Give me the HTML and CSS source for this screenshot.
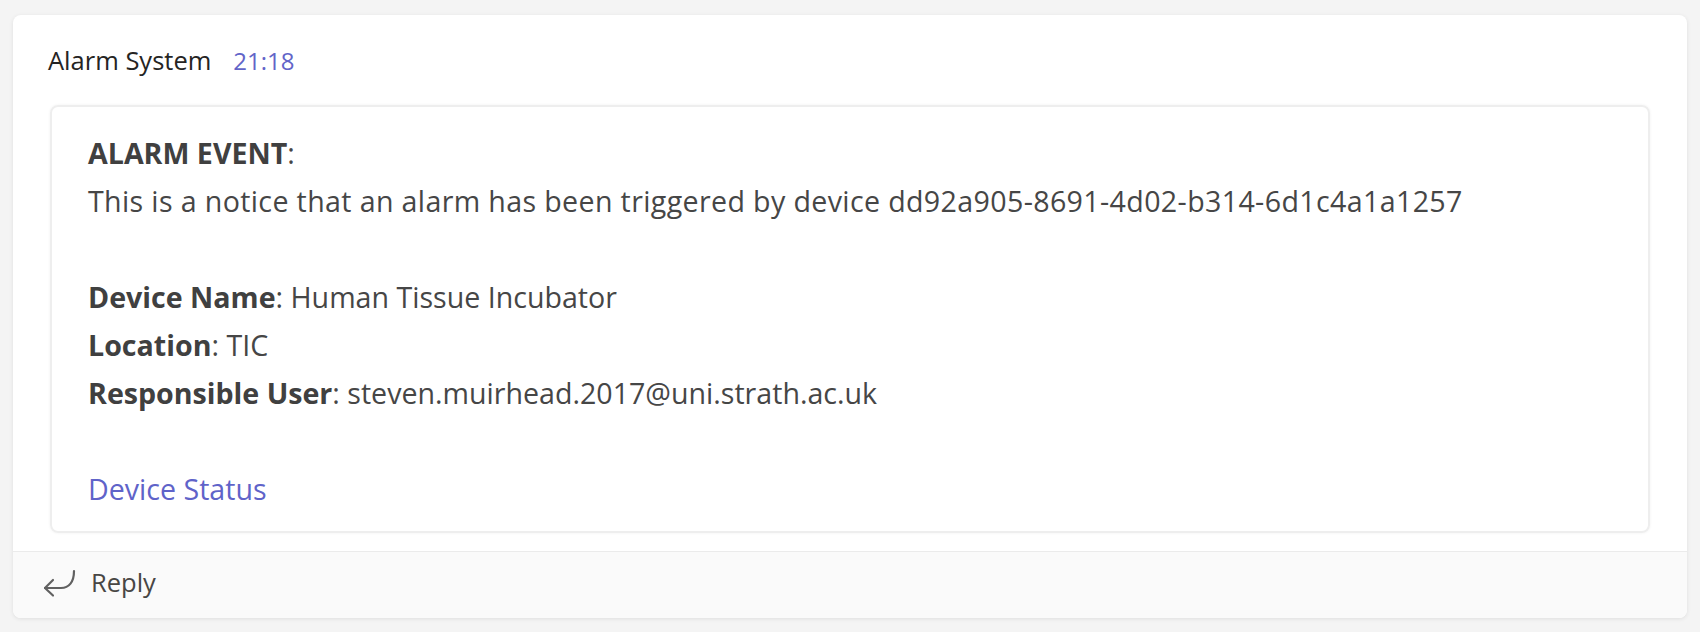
FILE: index.html
```html
<!DOCTYPE html>
<html lang="en">
<head>
<meta charset="utf-8">
<title>Alarm System</title>
<link rel="stylesheet" href="styles.css">
</head>
<body>
<div class="message">
  <div class="msg-header">
    <span class="sender">Alarm System</span>
    <span class="time">21:18</span>
  </div>
  <div class="card">
    <p class="line"><strong>ALARM EVENT</strong>:</p>
    <p class="line wide">This is a notice that an alarm has been triggered by device dd92a905-8691-4d02-b314-6d1c4a1a1257</p>
    <p class="line spaced"><strong>Device Name</strong>: Human Tissue Incubator</p>
    <p class="line"><strong>Location</strong>: TIC</p>
    <p class="line"><strong>Responsible User</strong>: steven.muirhead.2017@uni.strath.ac.uk</p>
    <p class="line spaced"><a class="link" href="#">Device Status</a></p>
  </div>
  <div class="footer">
    <svg class="reply-icon" width="34" height="30" viewBox="0 0 34 30" aria-hidden="true">
      <path d="M10 12 L2 20 L10 27.5" fill="none" stroke="#616161" stroke-width="2.2" stroke-linecap="round" stroke-linejoin="round"/>
      <path d="M2 20 H18 C26 20 31 14 31 3" fill="none" stroke="#616161" stroke-width="2.2" stroke-linecap="round" stroke-linejoin="round"/>
    </svg>
    <span class="reply">Reply</span>
  </div>
</div>
</body>
</html>
```

FILE: styles.css
```css
html, body {
  margin: 0;
  padding: 0;
}
body {
  background: #f4f4f4;
  padding: 15px 13px 14px 13px;
  font-family: "Open Sans", "Noto Sans", sans-serif;
  color: #424242;
}
.message {
  background: #ffffff;
  border-radius: 8px;
  box-shadow: 0 1px 4px rgba(0, 0, 0, 0.09);
  overflow: hidden;
}
.msg-header {
  display: flex;
  align-items: baseline;
  gap: 22px;
  padding: 27px 35px 0 35px;
  height: 36px;
  line-height: 36px;
}
.sender {
  font-size: 25.5px;
  color: #252423;
}
.time {
  font-size: 24px;
  color: #6264c8;
}
.card {
  margin: 27px 37px 0 37px;
  border: 2px solid #eeeeee;
  border-radius: 8px;
  box-shadow: 0 0 3px rgba(0, 0, 0, 0.06);
  padding: 22px 36px 18px 36px;
}
.line {
  margin: 0;
  font-size: 28.6px;
  line-height: 48px;
  color: #464646;
  white-space: nowrap;
}
.wide {
  letter-spacing: 0.36px;
}
.line strong {
  font-weight: 700;
  color: #404040;
}
.spaced {
  margin-top: 48px;
}
.link {
  color: #5f63c9;
  text-decoration: none;
}
.footer {
  margin-top: 18px;
  height: 60px;
  padding-bottom: 6px;
  border-top: 1px solid #ebebeb;
  background: #fafafa;
  display: flex;
  align-items: center;
  padding-left: 30px;
  gap: 14px;
}
.reply-icon {
  display: block;
  margin-top: 2px;
}
.reply {
  font-size: 25.5px;
  color: #484644;
}
```
